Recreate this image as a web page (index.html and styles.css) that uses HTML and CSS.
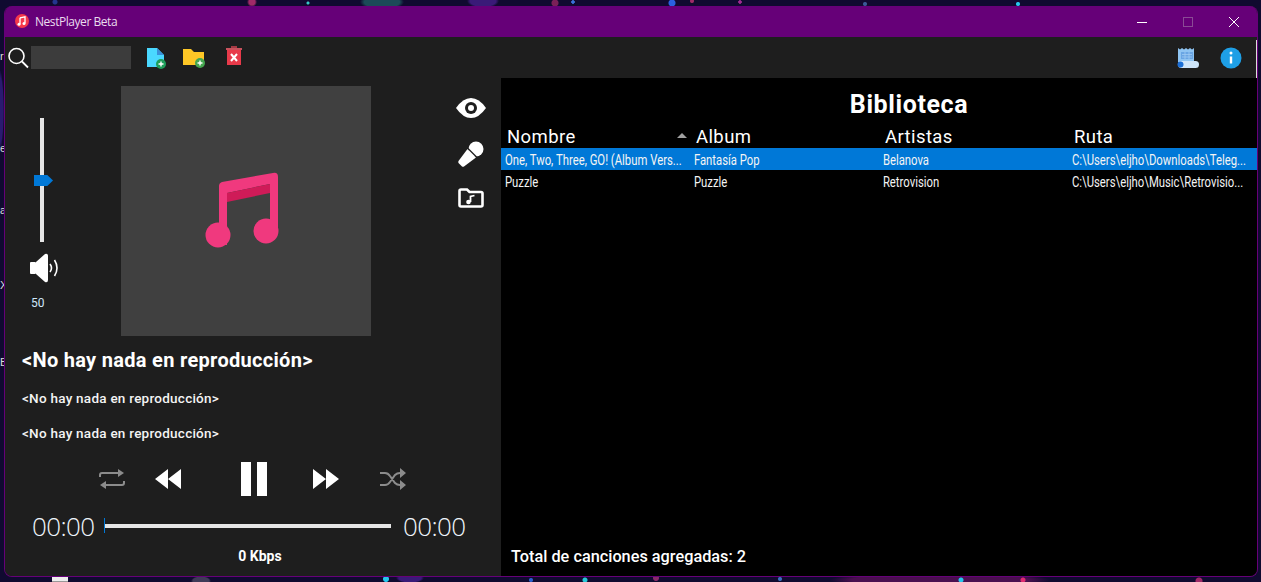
FILE: index.html
```html
<!DOCTYPE html>
<html lang="es">
<head>
<meta charset="utf-8">
<title>NestPlayer Beta</title>
<link rel="stylesheet" href="styles.css">
</head>
<body>
<div class="desktop">
  <span class="dlabel l1">r</span><span class="dlabel l2">e</span><span class="dlabel l3">a</span><span class="dlabel l4">X</span><span class="dlabel l5">B</span>
  <span class="deskicon"></span>
  <main class="window">
    <header class="titlebar">
      <svg class="appicon" viewBox="0 0 16 16"><circle cx="8" cy="8" r="7" fill="#f5384a"/><path d="M6 4.800 11 3.800V10.200" fill="none" stroke="#fff" stroke-width="1.300"/><path d="M6 4.800V11" fill="none" stroke="#fff" stroke-width="1.300"/><circle cx="5" cy="11.200" r="1.500" fill="#fff"/><circle cx="10" cy="10.400" r="1.500" fill="#fff"/></svg>
      <span class="apptitle">NestPlayer Beta</span>
      <div class="winbtns">
        <svg class="winbtn" viewBox="0 0 46 30"><path d="M18 15.500H28" stroke="#fff" fill="none"/></svg>
        <svg class="winbtn" viewBox="0 0 46 30"><rect x="18.500" y="10.500" width="9" height="9" stroke="#8a4a95" fill="none"/></svg>
        <svg class="winbtn" viewBox="0 0 46 30"><path d="M18 10 28 20M28 10 18 20" stroke="#fff" fill="none"/></svg>
      </div>
    </header>
    <nav class="toolbar">
      <svg class="search" viewBox="0 0 22 22"><circle cx="9.500" cy="9" r="7.500" fill="none" stroke="#fff" stroke-width="1.600"/><path d="M15 14.500 21 20.500" stroke="#fff" stroke-width="1.800"/></svg>
      <div class="searchbox"></div>
      <svg class="tool t-file" viewBox="0 0 21 24"><path d="M1 2h10l7 7v12H1z" fill="#4ad8ff"/><path d="M11 2l7 7h-7z" fill="#3a8fd8"/><circle cx="15" cy="18" r="5" fill="#1e9e5a"/><path d="M12.500 18h5M15 15.500v5" stroke="#fff" stroke-width="1.400"/></svg>
      <svg class="tool t-folder" viewBox="0 0 24 22"><path d="M1 2h8l3 3h10v13H1z" fill="#ffc726"/><circle cx="18" cy="16" r="5" fill="#45a750"/><path d="M15.500 16h5M18 13.500v5" stroke="#fff" stroke-width="1.400"/></svg>
      <svg class="tool t-trash" viewBox="0 0 18 22"><path d="M6 1h6v2H6z" fill="#a23a44"/><path d="M1 3h16v2H1z" fill="#c9525d"/><path d="M2 5h14v15H2z" fill="#e83a4a"/><path d="M6 9l6 7M12 9l-6 7" stroke="#fff" stroke-width="2"/></svg>
      <svg class="tool t-log" viewBox="0 0 22 22"><path d="M1 1l2 1.500 2-1.500 2 1.500 2-1.500 2 1.500 2-1.500 2 1.500 2-1.500V15H1z" fill="#8fc4f2"/><path d="M4 5h12v7H4z" fill="#6aa6e4"/><path d="M5 7.500h10M5 10h10M8 5v7M12 5v7" stroke="#9fcaf3" stroke-width=".8"/><rect x="1" y="14" width="21" height="7" rx="3.500" fill="#cfe5fa"/><circle cx="3.500" cy="17.500" r="3" fill="#1c6fd6"/></svg>
      <svg class="tool t-info" viewBox="0 0 22 22"><circle cx="11" cy="11" r="10.500" fill="#1e9fe6"/><circle cx="11" cy="6" r="1.500" fill="#fff"/><path d="M11 9.500v7" stroke="#fff" stroke-width="2.400"/></svg>
      <span class="edge"></span>
    </nav>
    <div class="content">
      <section class="player">
        <div class="top">
          <div class="volume">
            <div class="vslider"><span class="vthumb"></span></div>
            <svg class="speaker" viewBox="0 0 28 30"><rect x="0" y="9" width="6" height="12" rx="1" fill="#fff"/><path d="M6 9 15 1q3-1 3 2v24q0 3-3 2L6 21z" fill="#fff"/><path d="M20 11q3 4 0 8M24.500 7q5 8 0 16" fill="none" stroke="#fff" stroke-width="1.600"/></svg>
            <span class="volnum">50</span>
          </div>
          <div class="art">
            <svg class="note" viewBox="0 0 74 76"><path d="M14 72V14q0-3 3-4L68 1q5-1 5 4v57h-8V12L22 21v52z" fill="#f0397e"/><path d="M22 21 65 12V21L22 30z" fill="#cf1b58"/><circle cx="13" cy="63" r="12.500" fill="#f0397e"/><circle cx="61" cy="59" r="12.500" fill="#f0397e"/></svg>
          </div>
          <div class="sideicons">
            <svg class="eye" viewBox="0 0 30 20"><path d="M0 10Q7 0 15 0t15 10Q23 20 15 20T0 10z" fill="#fff"/><circle cx="15" cy="10" r="6" fill="#1e1e1e"/><circle cx="15" cy="10" r="3" fill="#fff"/></svg>
            <svg class="mic" viewBox="0 0 26 26"><circle cx="18" cy="8" r="7.500" fill="#fff"/><path d="M9.500 8 18 16.500 6 25.500q-1 .5-2 0L.5 22q-.5-1 0-2z" fill="#fff"/><path d="M10 7.500 18.500 16" stroke="#1e1e1e" stroke-width="1.200"/></svg>
            <svg class="musicfolder" viewBox="0 0 26 20"><path d="M1.500 5V3q0-1.500 1.500-1.500h6l2.500 2.500H23q1.500 0 1.500 1.500V17q0 1.500-1.500 1.500H3q-1.500 0-1.500-1.500z" fill="none" stroke="#fff" stroke-width="2.600"/><path d="M12.500 14V8.500l4-1" fill="none" stroke="#fff" stroke-width="1.800"/><circle cx="10.500" cy="14" r="2.300" fill="#fff"/></svg>
          </div>
        </div>
        <h2 class="track">&lt;No hay nada en reproducción&gt;</h2>
        <p class="meta m1">&lt;No hay nada en reproducción&gt;</p>
        <p class="meta m2">&lt;No hay nada en reproducción&gt;</p>
        <div class="controls">
          <svg class="c-repeat" viewBox="0 0 26 22"><path d="M1 9V7q0-2 2-2h18M25 13v2q0 2-2 2H5" fill="none" stroke="#8c8c8c" stroke-width="2"/><path d="M19 1l6 4-6 4zM7 13l-6 4 6 4z" fill="#8c8c8c"/></svg>
          <svg class="c-skip c-prev" viewBox="0 0 26 20"><path d="M13 0 0 10l13 10zM26 0 13 10l13 10z" fill="#fff"/></svg>
          <svg class="c-pause" viewBox="0 0 27 34"><path d="M0 0h10v34H0zM16 0h10v34H16z" fill="#fff"/></svg>
          <svg class="c-skip" viewBox="0 0 26 20"><path d="M0 0 13 10 0 20zM13 0l13 10-13 10z" fill="#fff"/></svg>
          <svg class="c-shuffle" viewBox="0 0 26 22"><path d="M0 5h5q3 0 5 3l5 7q2 2 5 2h1M0 17h5q3 0 5-3l5-7q2-2 5-2h1" fill="none" stroke="#8c8c8c" stroke-width="2"/><path d="M20 0l6 5-6 5zM20 12l6 5-6 5z" fill="#8c8c8c"/></svg>
        </div>
        <div class="seek">
          <span class="time">00:00</span>
          <div class="seekbar"><span class="seekthumb"></span></div>
          <span class="time">00:00</span>
        </div>
        <div class="kbps">0 Kbps</div>
      </section>
      <section class="library">
        <h1 class="libtitle">Biblioteca</h1>
        <div class="cols head">
          <div class="hcell sorted">Nombre</div>
          <div class="hcell">Album</div>
          <div class="hcell">Artistas</div>
          <div class="hcell">Ruta</div>
        </div>
        <div class="cols row selected">
          <div class="cell">One, Two, Three, GO! (Album Vers...</div>
          <div class="cell">Fantasía Pop</div>
          <div class="cell">Belanova</div>
          <div class="cell">C:\Users\eljho\Downloads\Teleg...</div>
        </div>
        <div class="cols row">
          <div class="cell">Puzzle</div>
          <div class="cell">Puzzle</div>
          <div class="cell">Retrovision</div>
          <div class="cell">C:\Users\eljho\Music\Retrovisio...</div>
        </div>
        <div class="total">Total de canciones agregadas: 2</div>
      </section>
    </div>
  </main>
</div>
</body>
</html>
```
FILE: styles.css
```css
* { box-sizing: border-box; }
html, body { margin: 0; height: 100%; overflow: hidden; }
body { font-family: "Roboto", "Liberation Sans", sans-serif; color: #fff; }
.desktop {
  position: relative;
  width: 1261px; height: 582px;
  padding: 6px 3px 5px 4px;
  background-color: #100a30;
  background-image:
    radial-gradient(circle at 252px 2px, #a02a68 0 3px, transparent 5px),
    radial-gradient(circle at 55px 2px, #24358f 0 2px, transparent 3px),
    radial-gradient(circle at 308px 3px, #35c8c8 0 1px, transparent 2px),
    radial-gradient(ellipse 22px 8px at 382px 2px, #1c4a58 0 80%, transparent),
    radial-gradient(ellipse 16px 7px at 483px 1px, #3a1a78 0 80%, transparent),
    radial-gradient(circle at 555px 3px, #7a2058 0 3px, transparent 4px),
    radial-gradient(circle at 573px 2px, #3a70d8 0 1.500px, transparent 2px),
    radial-gradient(circle at 672px 3px, #2a60e0 0 3px, transparent 4px),
    radial-gradient(circle at 692px 1px, #a02a68 0 1.500px, transparent 2.500px),
    radial-gradient(circle at 740px 2px, #a02a90 0 1.500px, transparent 2px),
    radial-gradient(circle at 865px 4px, #3a5a98 0 1.500px, transparent 2.500px),
    radial-gradient(circle at 1018px 4px, #25c9ee 0 1.500px, transparent 2.500px),
    radial-gradient(ellipse 10px 5px at 201px 581px, #3f3a58 0 80%, transparent),
    radial-gradient(circle at 386px 579px, #25c9ee 0 2.500px, transparent 3.500px),
    radial-gradient(ellipse 14px 5px at 410px 578px, #3a1a78 0 80%, transparent),
    radial-gradient(circle at 531px 580px, #2a60d0 0 1.500px, transparent 2.500px),
    radial-gradient(circle at 585px 580px, #25c9d8 0 2px, transparent 3px),
    radial-gradient(circle at 656px 578px, #8a2a68 0 2.500px, transparent 3.500px),
    radial-gradient(circle at 780px 579px, #3a70c0 0 1.500px, transparent 2.500px),
    radial-gradient(circle at 961px 580px, #25c9ee 0 2px, transparent 3px),
    radial-gradient(circle at 1023px 580px, #e02a70 0 2px, transparent 3px),
    radial-gradient(ellipse 110px 8px at 940px 580px, #4a0f50 0 80%, transparent),
    radial-gradient(circle at 1199px 581px, #a02a68 0 3px, transparent 4px),
    radial-gradient(ellipse 4px 40px at 0 110px, #2a1a70 0 80%, transparent);
}
.dlabel { position: absolute; left: 0; font: 11px "Liberation Sans", sans-serif; color: #ddd; }
.l1 { top: 50px; } .l2 { top: 142px; } .l3 { top: 204px; } .l4 { top: 279px; } .l5 { top: 356px; }
.deskicon { position: absolute; left: 52px; top: 577px; width: 16px; height: 5px; background: #eee; border-bottom: 1px solid #999; }

.window {
  position: relative;
  display: flex; flex-direction: column;
  height: 571px;
  border: 1px solid #660078;
  border-top: 0;
  border-radius: 8px;
  overflow: hidden;
  background: #1e1e1e;
}
.titlebar {
  display: flex; align-items: center;
  height: 31px; flex: none;
  padding-left: 9px;
  background: #660078;
}
.appicon { width: 16px; height: 16px; margin-top: -1px; }
.apptitle { margin-left: 5px; font: 12px "Open Sans", sans-serif; letter-spacing: -.45px; color: #eadcee; }
.winbtns { margin-left: auto; display: flex; }
.winbtn { width: 46px; height: 30px; }

.toolbar {
  position: relative;
  display: flex; align-items: center;
  height: 41px; flex: none;
  padding-left: 2px;
  background: #1e1e1e;
}
.search { width: 22px; height: 22px; }
.searchbox { width: 100px; height: 23px; margin-left: 2px; background: #3c3c3c; }
.tool { flex: none; }
.t-file { width: 21px; height: 24px; margin-left: 15px; }
.t-folder { width: 24px; height: 22px; margin-left: 15px; }
.t-trash { width: 18px; height: 22px; margin-left: 19px; margin-bottom: 3px; }
.t-log { width: 22px; height: 22px; margin-left: auto; }
.t-info { width: 22px; height: 22px; margin-left: 21px; margin-right: 15px; }
.edge { position: absolute; right: 0; top: 3px; width: 1px; height: 38px; background: #ddd; }

.content { flex: 1; display: flex; min-height: 0; }
.player { width: 496px; flex: none; display: flex; flex-direction: column; background: #1e1e1e; }
.top { display: flex; height: 258px; padding-top: 8px; }
.volume { width: 116px; flex: none; position: relative; display: flex; flex-direction: column; align-items: flex-start; padding-top: 32px; }
.vslider { position: relative; width: 4px; height: 124px; margin-left: 35px; background: #e6e6e6; }
.vthumb {
  position: absolute; left: -6px; top: 57px;
  width: 19px; height: 11px;
  background: #0078d7;
  clip-path: polygon(0 0, 70% 0, 100% 50%, 70% 100%, 0 100%);
}
.speaker { width: 28px; height: 30px; margin: 11px 0 0 25px; }
.volnum { margin: 13px 0 0 26px; font-size: 12px; line-height: 14px; color: #cfe7fb; }
.art { width: 250px; height: 250px; flex: none; display: flex; align-items: center; justify-content: center; padding: 0 8px 2px 0; background: #404040; }
.note { width: 74px; height: 76px; }
.sideicons { display: flex; flex-direction: column; align-items: center; width: 30px; margin-left: 85px; padding-top: 12px; }
.eye { width: 30px; height: 20px; }
.mic { width: 26px; height: 26px; margin-top: 23px; }
.musicfolder { width: 26px; height: 20px; margin-top: 21px; }

.track { margin: 12px 0 0 17px; font-size: 20px; line-height: 24px; font-weight: 700; letter-spacing: .3px; }
.meta { margin: 0 0 0 17px; font-size: 13.500px; line-height: 18px; font-weight: 500; letter-spacing: .25px; color: #f4f4f4; }
.m1 { margin-top: 17px; }
.m2 { margin-top: 17px; }

.controls { display: flex; align-items: center; height: 34px; margin: 20px 0 0 94px; }
.c-repeat { width: 26px; height: 22px; }
.c-skip { width: 26px; height: 20px; }
.c-prev { margin-left: 30px; }
.c-pause { width: 27px; height: 34px; margin: 0 45px 0 60px; }
.c-shuffle { width: 26px; height: 22px; margin-left: 41px; }

.seek { display: flex; align-items: center; height: 30px; margin: 15px 0 0 27px; }
.time { font-family: "Open Sans", sans-serif; font-size: 26px; font-weight: 300; width: 62px; color: #eef5fb; letter-spacing: -.6px; }
.seekbar { position: relative; width: 287px; height: 4px; margin: 0 12px 0 10px; background: #e6e6e6; }
.seekthumb { position: absolute; left: 0; top: -6px; width: 1px; height: 15px; background: #0078d7; }
.kbps { margin-top: 6px; text-align: center; width: 510px; font-size: 14px; line-height: 18px; font-weight: 700; }

.library { flex: 1; display: flex; flex-direction: column; background: #000; padding-bottom: 8px; min-width: 0; }
.libtitle { margin: 0; height: 41px; padding: 12px 0 0 60px; text-align: center; font-size: 25px; line-height: 30px; font-weight: 700; letter-spacing: .6px; }
.cols { display: grid; grid-template-columns: repeat(4, 189px); }
.head { height: 29px; align-items: end; }
.hcell { padding-left: 6px; font-size: 18.500px; line-height: 22px; font-weight: 400; letter-spacing: .4px; }
.sorted { position: relative; }
.sorted::after {
  content: ""; position: absolute; right: 3px; top: 7px;
  border: 5px solid transparent; border-top: 0;
  border-bottom: 5px solid #a0a0a0;
}
.row { height: 22px; align-items: center; padding-top: 4px; }
.selected { background: #0078d7; }
.cell { width: 128%; padding-left: 5px; white-space: nowrap; font-size: 14.500px; line-height: 18px; color: #f4f4f4; transform: scaleX(.78); transform-origin: left center; }
.total { margin-top: auto; padding-left: 10px; font-size: 16.300px; line-height: 22px; font-weight: 500; }
```
